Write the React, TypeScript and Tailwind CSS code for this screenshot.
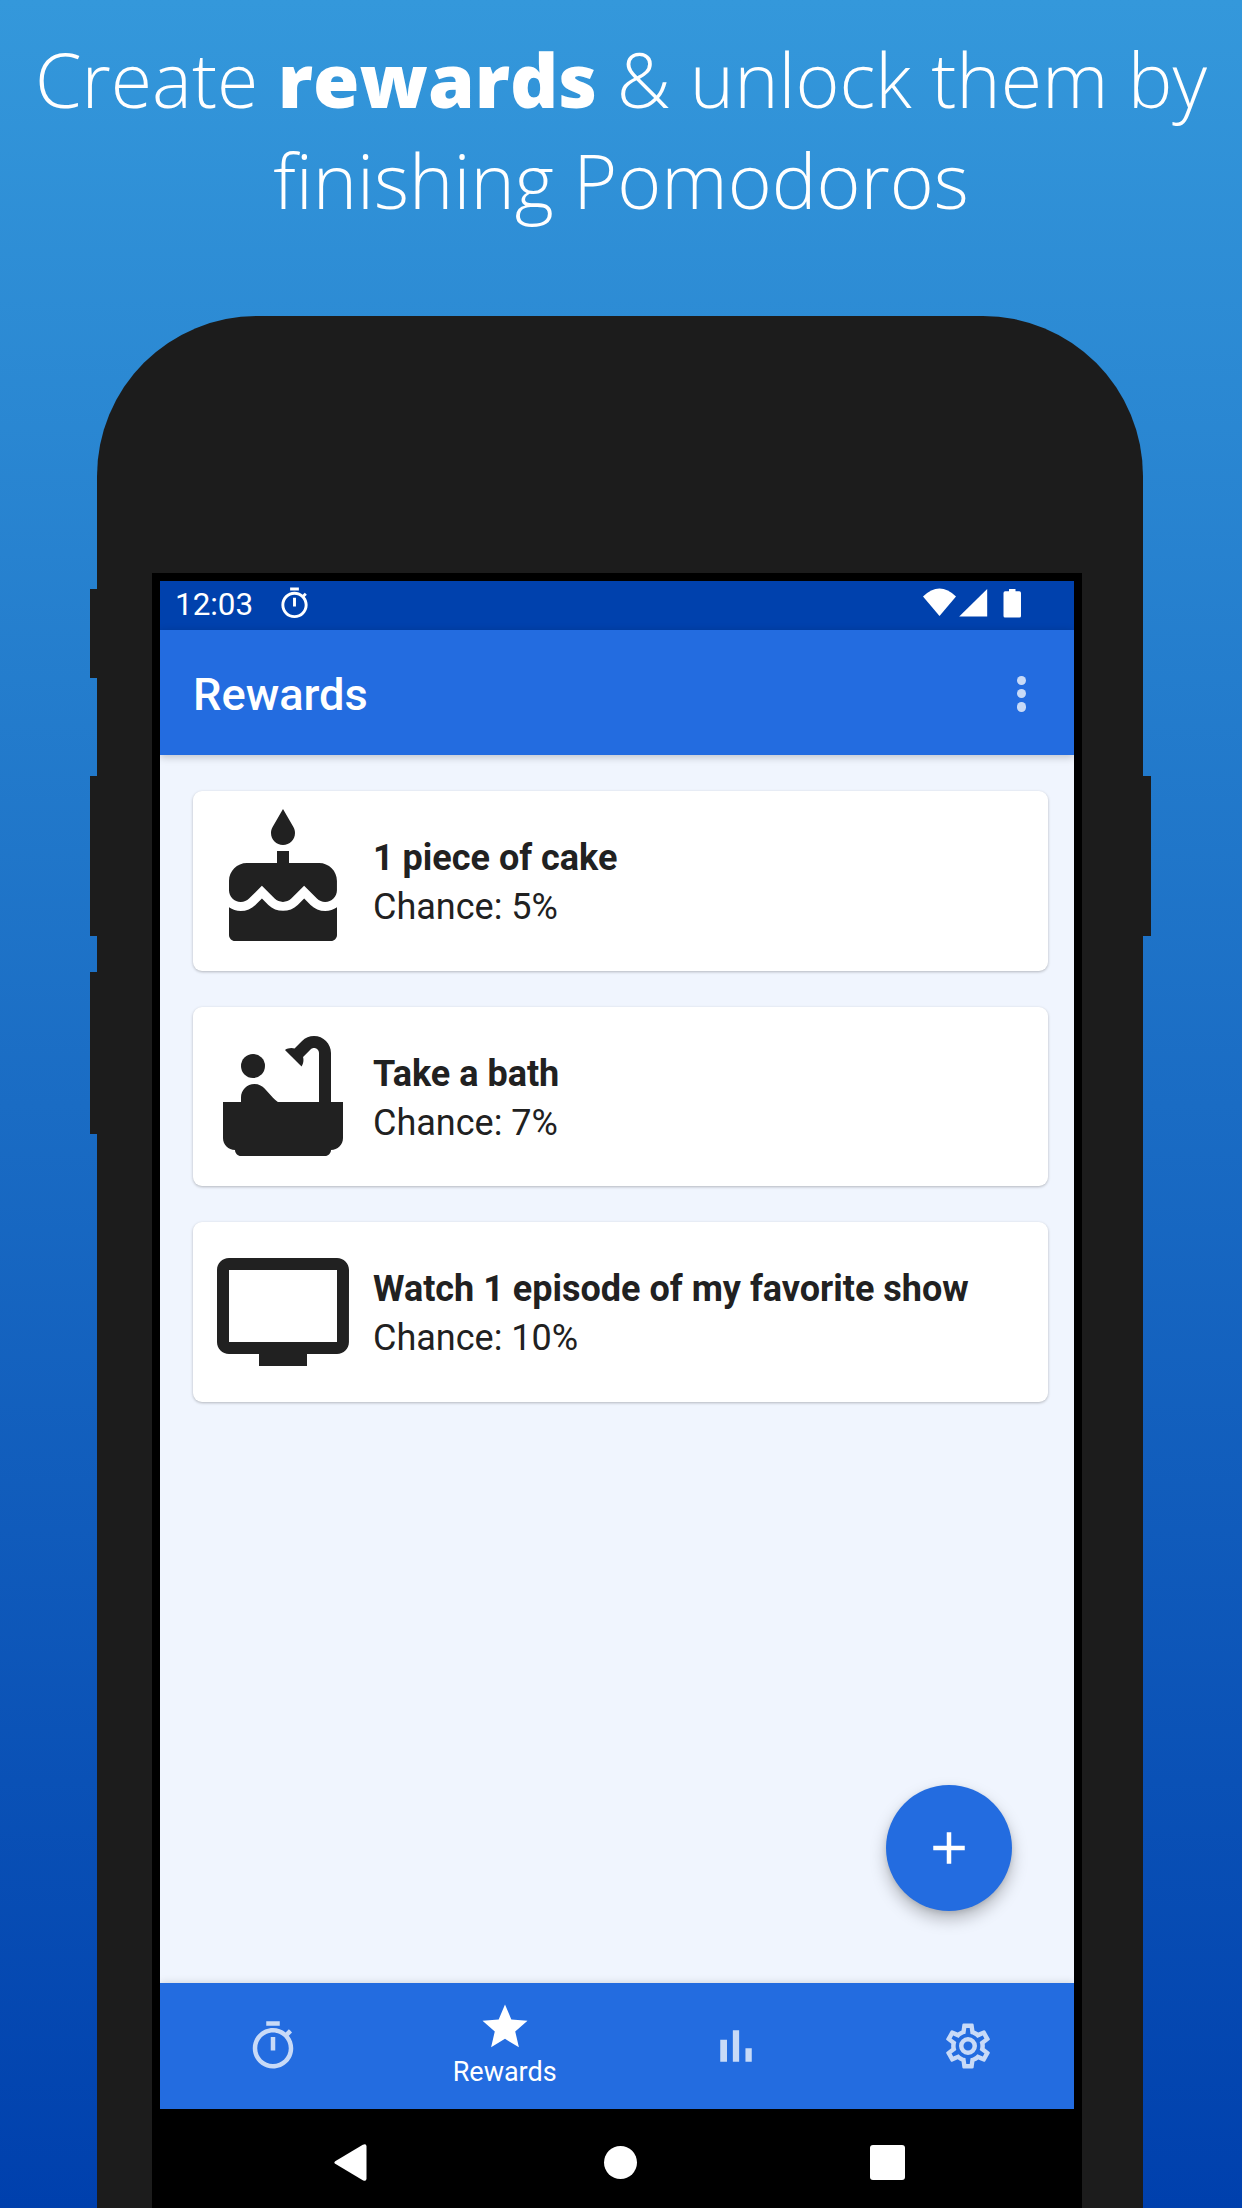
import type { ReactNode } from "react";

type IconProps = { className?: string; children: ReactNode };

function Icon({ className, children }: IconProps) {
  return (
    <svg viewBox="0 0 24 24" fill="currentColor" className={className} aria-hidden="true">
      {children}
    </svg>
  );
}

const TimerPath = () => (
  <path d="M15 1H9v2h6V1zm-4 13h2V8h-2v6zm8.03-6.61 1.42-1.42c-.43-.51-.9-.99-1.41-1.41l-1.42 1.42C16.07 4.74 14.12 4 12 4c-4.97 0-9 4.03-9 9s4.02 9 9 9 9-4.03 9-9c0-2.12-.74-4.07-1.97-5.61zM12 20c-3.87 0-7-3.13-7-7s3.13-7 7-7 7 3.13 7 7-3.13 7-7 7z" />
);

const CakePath = () => (
  <path d="M12 6c1.11 0 2-.9 2-2 0-.38-.1-.73-.29-1.03L12 0l-1.71 2.97c-.19.3-.29.65-.29 1.03 0 1.1.9 2 2 2zm4.6 9.99l-1.07-1.07-1.08 1.07c-1.3 1.3-3.58 1.31-4.89 0l-1.07-1.07-1.09 1.07C6.75 16.64 5.88 17 4.96 17c-.73 0-1.4-.23-1.96-.61V21c0 .55.45 1 1 1h16c.55 0 1-.45 1-1v-4.61c-.56.38-1.23.61-1.96.61-.92 0-1.79-.36-2.44-1.01zM18 9h-5V7h-2v2H6c-1.66 0-3 1.34-3 3v1.54c0 1.08.88 1.96 1.96 1.96.52 0 1.02-.2 1.38-.57l2.14-2.13 2.13 2.13c.74.74 2.03.74 2.77 0l2.14-2.13 2.13 2.13c.37.37.86.57 1.38.57 1.08 0 1.96-.88 1.96-1.96V12C21 10.34 19.66 9 18 9z" />
);

const BathPath = () => (
  <>
    <circle cx="7" cy="7" r="2" />
    <path d="M20 13V4.83C20 3.27 18.73 2 17.17 2c-.75 0-1.47.3-2 .83l-1.25 1.25c-.16-.05-.33-.08-.51-.08-.4 0-.77.12-1.08.32l2.76 2.76c.2-.31.32-.68.32-1.08 0-.18-.03-.34-.07-.51l1.25-1.25c.15-.15.36-.24.58-.24.46 0 .83.37.83.83V13h-6.85c-.3-.21-.57-.45-.82-.72l-1.4-1.55c-.19-.21-.43-.38-.69-.5-.31-.15-.65-.23-1-.23C6 10.01 5 11.01 5 12.25V13H2v6c0 1.1.9 2 2 2 0 .55.45 1 1 1h14c.55 0 1-.45 1-1 1.1 0 2-.9 2-2v-6h-2z" />
  </>
);

const TvPath = () => (
  <path d="M21 3H3c-1.11 0-2 .89-2 2v12c0 1.1.89 2 2 2h5v2h8v-2h5c1.1 0 1.99-.9 1.99-2L23 5c0-1.11-.9-2-2-2zm0 14H3V5h18v12z" />
);

const StarPath = () => (
  <path d="M12 17.27 18.18 21l-1.64-7.03L22 9.24l-7.19-.61L12 2 9.19 8.63 2 9.24l5.46 4.73L5.82 21z" />
);

const BarsPath = () => <path d="M5 9.2h3V19H5V9.2zM10.6 5h2.8v14h-2.8V5zm5.6 8H19v6h-2.8v-6z" />;

const CogPath = () => (
  <path d="M12,8A4,4 0 0,1 16,12A4,4 0 0,1 12,16A4,4 0 0,1 8,12A4,4 0 0,1 12,8M12,10A2,2 0 0,0 10,12A2,2 0 0,0 12,14A2,2 0 0,0 14,12A2,2 0 0,0 12,10M10,22C9.75,22 9.54,21.82 9.5,21.58L9.13,18.93C8.5,18.68 7.96,18.34 7.44,17.94L4.95,18.95C4.73,19.03 4.46,18.95 4.34,18.73L2.34,15.27C2.21,15.05 2.27,14.78 2.46,14.63L4.57,12.97L4.5,12L4.57,11L2.46,9.37C2.27,9.22 2.21,8.95 2.34,8.73L4.34,5.27C4.46,5.05 4.73,4.96 4.95,5.05L7.44,6.05C7.96,5.66 8.5,5.32 9.13,5.07L9.5,2.42C9.54,2.18 9.75,2 10,2H14C14.25,2 14.46,2.18 14.5,2.42L14.87,5.07C15.5,5.32 16.04,5.66 16.56,6.05L19.05,5.05C19.27,4.96 19.54,5.05 19.66,5.27L21.66,8.73C21.79,8.95 21.73,9.22 21.54,9.37L19.43,11L19.5,12L19.43,13L21.54,14.63C21.73,14.78 21.79,15.05 21.66,15.27L19.66,18.73C19.54,18.95 19.27,19.04 19.05,18.95L16.56,17.95C16.04,18.34 15.5,18.68 14.87,18.93L14.5,21.58C14.46,21.82 14.25,22 14,22H10M11.25,4L10.88,6.61C9.68,6.86 8.62,7.5 7.85,8.39L5.44,7.35L4.69,8.65L6.8,10.2C6.4,11.37 6.4,12.64 6.8,13.8L4.68,15.36L5.43,16.66L7.86,15.62C8.63,16.5 9.68,17.14 10.87,17.38L11.24,20H12.76L13.13,17.39C14.32,17.14 15.37,16.5 16.14,15.62L18.57,16.66L19.32,15.36L17.2,13.81C17.6,12.64 17.6,11.37 17.2,10.2L19.31,8.65L18.56,7.35L16.15,8.39C15.38,7.5 14.32,6.86 13.12,6.62L12.75,4H11.25Z" />
);

const rewards = [
  { title: "1 piece of cake", chance: "5%", icon: <CakePath /> },
  { title: "Take a bath", chance: "7%", icon: <BathPath /> },
  { title: "Watch 1 episode of my favorite show", chance: "10%", icon: <TvPath /> },
];

function StatusBar() {
  return (
    <div className="flex h-[48.5px] shrink-0 items-center bg-[#0041ad] pr-[53px] pb-[4px] pl-[15px] text-white">
      <span className="w-[102px] pt-[3px] text-[31.4px] leading-[40px]">12:03</span>
      <Icon className="size-[35px]">
        <TimerPath />
      </Icon>
      <svg viewBox="0 0 98 30" fill="currentColor" className="ml-auto h-[30px] w-[98px]" aria-hidden="true">
        <path d="M0 8.500Q16.500 -7.500 33 8.500L16.500 28Z" />
        <path d="M64.200 1V28.500H36.200Z" />
        <path d="M86 1H92.500V3.300H96.300A1.700 1.700 0 0 1 98 5V28A1.500 1.500 0 0 1 96.500 29.500H82A1.500 1.500 0 0 1 80.500 28V5A1.700 1.700 0 0 1 82.200 3.300H86Z" />
      </svg>
    </div>
  );
}

function AppBar() {
  return (
    <header className="z-10 flex h-[125.5px] shrink-0 items-center justify-between bg-[#236ce0] pr-[48px] pl-[33px] text-white shadow-[0_2px_8px_rgba(0,0,0,0.22)]">
      <h1 className="pt-[5px] text-[45.2px] leading-[56px] font-medium">Rewards</h1>
      <div className="flex flex-col gap-[4px] pt-[3px]">
        <i className="size-[9.4px] rounded-full bg-[#c8daf7]" />
        <i className="size-[9.4px] rounded-full bg-[#c8daf7]" />
        <i className="size-[9.4px] rounded-full bg-[#c8daf7]" />
      </div>
    </header>
  );
}

function RewardCard({ title, chance, icon }: { title: string; chance: string; icon: ReactNode }) {
  return (
    <article className="flex h-[179.5px] items-center gap-[18px] rounded-[9px] bg-white px-[18px] text-[#212121] shadow-[0_1px_3px_rgba(0,0,0,0.26)]">
      <Icon className="size-36 shrink-0">{icon}</Icon>
      <div className="pt-[5px] text-[36px] leading-[49px]">
        <h2 className="font-bold">{title}</h2>
        <p>Chance: {chance}</p>
      </div>
    </article>
  );
}

function NavItem({ icon, label }: { icon: ReactNode; label?: string }) {
  return (
    <div className="flex w-[231.8px] shrink-0 flex-col items-center justify-center">
      <Icon className={label ? "size-[54px] text-white" : "size-[54px] text-[#c8daf7]"}>{icon}</Icon>
      {label && <span className="mt-[2px] mb-[3px] text-[27px] leading-[32px] text-white">{label}</span>}
    </div>
  );
}

function Screen() {
  return (
    <div className="ml-[8px] flex h-[1527.5px] w-[914px] flex-col overflow-hidden bg-[#f0f5fe]">
      <StatusBar />
      <AppBar />
      <main className="relative flex flex-1 flex-col gap-[36px] pt-[36px] pr-[26px] pl-[33px]">
        {rewards.map((r) => (
          <RewardCard key={r.title} {...r} />
        ))}
        <button className="absolute right-[62px] bottom-[72px] flex size-[126px] items-center justify-center rounded-full bg-[#236ce0] text-white shadow-[0_8px_16px_rgba(0,0,0,0.25),0_2px_5px_rgba(0,0,0,0.1)]">
          <Icon className="size-[54px]">
            <path d="M19 13h-6v6h-2v-6H5v-2h6V5h2v6h6v2z" />
          </Icon>
        </button>
      </main>
      <nav className="z-10 flex h-[125.5px] shrink-0 bg-[#236ce0] shadow-[0_0_8px_rgba(0,0,0,0.15)]">
        <div className="-ml-[3px] flex">
          <NavItem icon={<TimerPath />} />
          <NavItem icon={<StarPath />} label="Rewards" />
          <NavItem icon={<BarsPath />} />
          <NavItem icon={<CogPath />} />
        </div>
      </nav>
    </div>
  );
}

function SystemNav() {
  return (
    <div className="flex flex-1 items-center justify-between pt-[8px] pr-[177px] pl-[182px] text-white">
      <svg viewBox="0 0 33 37" fill="currentColor" className="h-[37px] w-[33px]" aria-hidden="true">
        <path d="M1.200 17.200 28.800 .8Q32.500 -.8 32.500 2.500V34.500Q32.500 37.800 28.800 36.200L1.200 19.800Q-.5 18.500 1.200 17.200Z" />
      </svg>
      <i className="ml-[4px] size-[33px] rounded-full bg-white" />
      <i className="size-[34.5px] rounded-[3px] bg-white" />
    </div>
  );
}

export default function App() {
  return (
    <div className="flex h-[2208px] w-[1242px] flex-col overflow-hidden bg-[linear-gradient(to_bottom,#3498db,#0040ad)] font-['Roboto',sans-serif]">
      <p className="h-[316px] shrink-0 pt-[29px] text-center font-['Open_Sans',sans-serif] text-[75.15px] leading-[101px] font-light whitespace-nowrap text-white">
        Create <b className="font-extrabold">rewards</b> &amp; unlock them by
        <br />
        finishing Pomodoros
      </p>
      <div className="relative ml-[96.7px] flex w-[1046px] flex-1 flex-col rounded-t-[160px] bg-[#1c1c1c] pt-[256.5px] pl-[55.3px]">
        <i className="absolute top-[273px] -left-[7px] h-[88.5px] w-[8px] bg-[#1c1c1c]" />
        <i className="absolute top-[459.5px] -left-[7px] h-[160px] w-[8px] bg-[#1c1c1c]" />
        <i className="absolute top-[655.5px] -left-[7px] h-[162px] w-[8px] bg-[#1c1c1c]" />
        <i className="absolute top-[459.5px] -right-[8px] h-[160px] w-[9px] bg-[#1c1c1c]" />
        <div className="flex w-[930px] flex-1 flex-col bg-black pt-[8.5px]">
          <Screen />
          <SystemNav />
        </div>
      </div>
    </div>
  );
}
